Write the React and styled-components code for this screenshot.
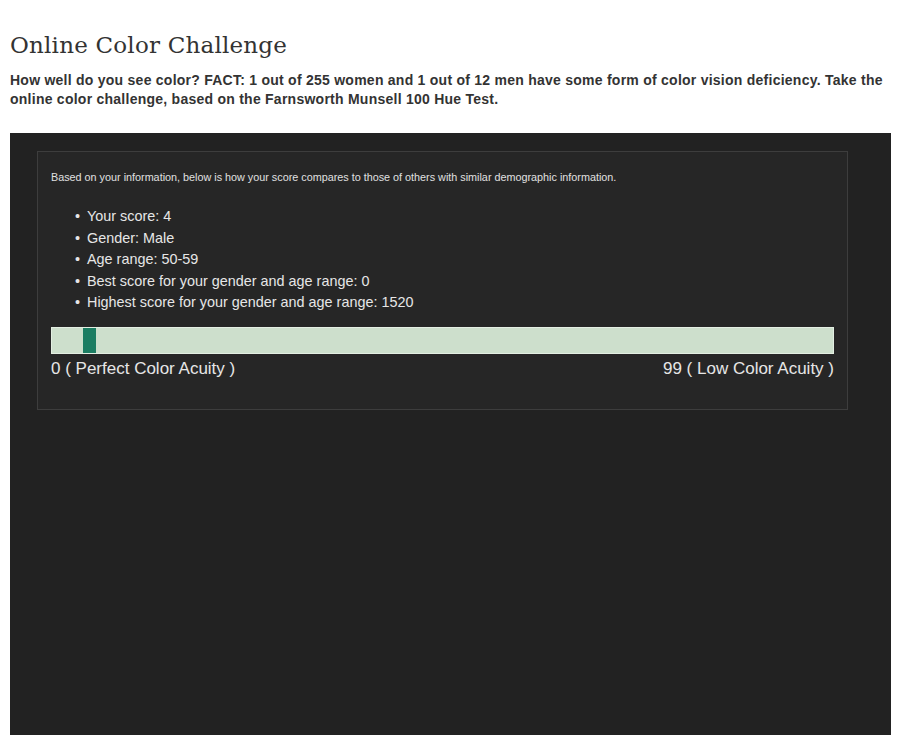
import React from "react";
import styled, { createGlobalStyle } from "styled-components";

const GlobalStyle = createGlobalStyle`
  html, body {
    margin: 0;
    padding: 0;
    background: #fff;
  }
  body {
    font-family: "Liberation Sans", Arial, sans-serif;
    overflow: hidden;
  }
`;

const Page = styled.div`
  padding: 0 9px 0 10px;
  height: 735px;
  display: flex;
  flex-direction: column;
`;

const Title = styled.h1`
  margin: 30px 0 0;
  font-family: "DejaVu Serif", "Liberation Serif", serif;
  font-weight: normal;
  font-size: 23px;
  line-height: 30px;
  color: #333;
  letter-spacing: 0.2px;
`;

const Intro = styled.p`
  margin: 11px 0 0;
  font-size: 14px;
  font-weight: bold;
  line-height: 19px;
  letter-spacing: 0.25px;
  color: #333;
`;

const Stage = styled.div`
  margin-top: 24px;
  flex: 1;
  background: #222;
  padding: 18px 43px 0 27px;
`;

const ResultBox = styled.div`
  border: 1px solid #3d3d3d;
  background: #262626;
  padding: 18px 13px 29px 13px;
  color: #e6e6e6;
`;

const Note = styled.p`
  margin: 0;
  font-size: 10.8px;
  line-height: 14px;
  color: #e0e0e0;
`;

const Facts = styled.ul`
  margin: 22px 0 0;
  padding: 0 0 0 36px;
  list-style: none;
`;

const Fact = styled.li`
  position: relative;
  font-size: 14.4px;
  line-height: 21.5px;
  color: #e6e6e6;
  &::before {
    content: "•";
    position: absolute;
    left: -12px;
  }
`;

const Track = styled.div`
  position: relative;
  margin-top: 13px;
  height: 25px;
  background: #cddfcc;
  border: 1px solid #e3eee2;
`;

const Marker = styled.div`
  position: absolute;
  top: 0;
  bottom: 0;
  width: 13px;
  background: #1b7d62;
`;

const Scale = styled.div`
  display: flex;
  justify-content: space-between;
  margin-top: 4px;
  font-size: 17px;
  line-height: 22px;
  color: #e6e6e6;
`;

const facts = [
  "Your score: 4",
  "Gender: Male",
  "Age range: 50-59",
  "Best score for your gender and age range: 0",
  "Highest score for your gender and age range: 1520",
];

const score = 4;

export default function App() {
  return (
    <>
      <GlobalStyle />
      <Page>
        <Title>Online Color Challenge</Title>
        <Intro>
          How well do you see color? FACT: 1 out of 255 women and 1 out of 12 men have some form of color
          vision deficiency. Take the online color challenge, based on the Farnsworth Munsell 100 Hue Test.
        </Intro>
        <Stage>
          <ResultBox>
            <Note>
              Based on your information, below is how your score compares to those of others with similar
              demographic information.
            </Note>
            <Facts>
              {facts.map((f) => (
                <Fact key={f}>{f}</Fact>
              ))}
            </Facts>
            <Track>
              <Marker style={{ left: `calc(${(score / 99) * 100}% - 1px)` }} />
            </Track>
            <Scale>
              <span>0 ( Perfect Color Acuity )</span>
              <span>99 ( Low Color Acuity )</span>
            </Scale>
          </ResultBox>
        </Stage>
      </Page>
    </>
  );
}
